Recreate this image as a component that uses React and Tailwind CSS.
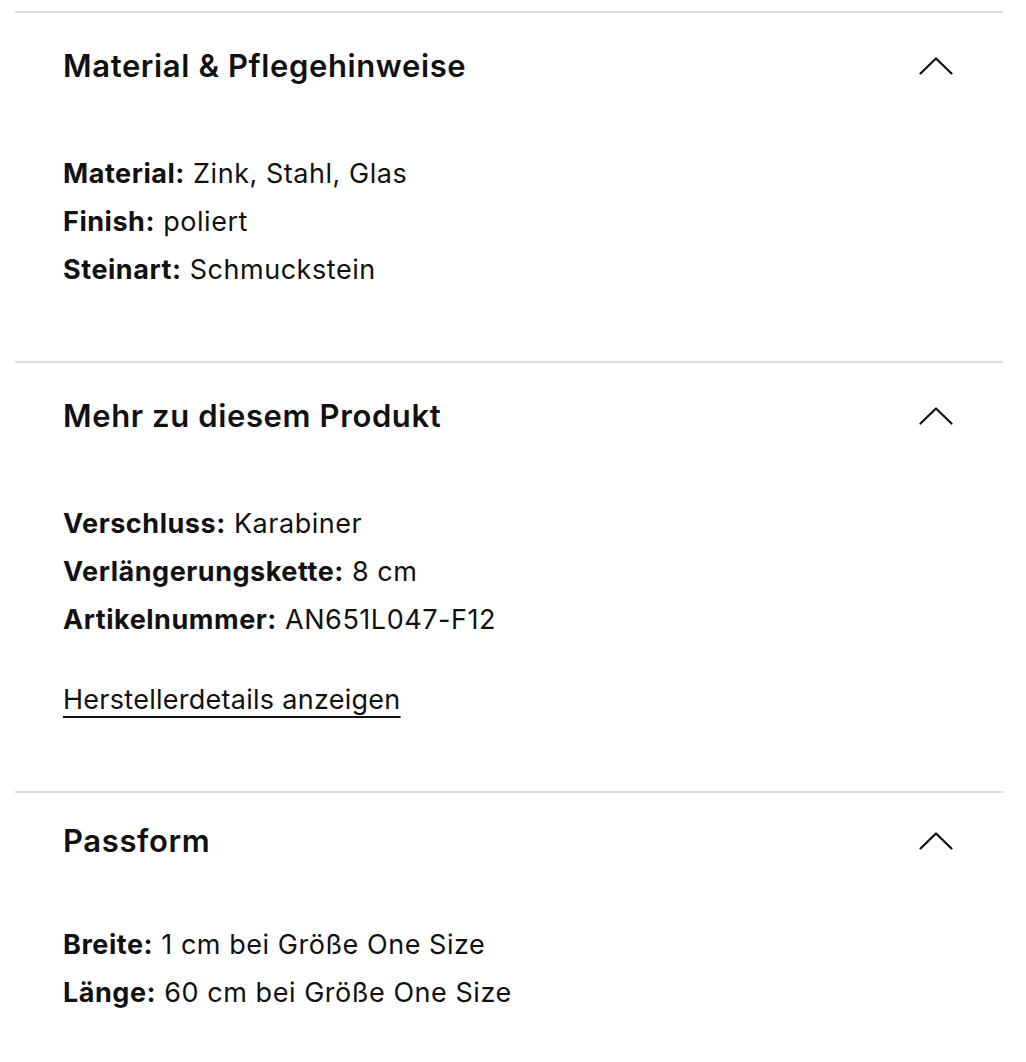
const sections = [
  {
    title: 'Material & Pflegehinweise',
    rows: [
      ['Material:', 'Zink, Stahl, Glas'],
      ['Finish:', 'poliert'],
      ['Steinart:', 'Schmuckstein'],
    ],
  },
  {
    title: 'Mehr zu diesem Produkt',
    rows: [
      ['Verschluss:', 'Karabiner'],
      ['Verlängerungskette:', '8 cm'],
      ['Artikelnummer:', 'AN651L047-F12'],
    ],
    link: 'Herstellerdetails anzeigen',
  },
  {
    title: 'Passform',
    rows: [
      ['Breite:', '1 cm bei Größe One Size'],
      ['Länge:', '60 cm bei Größe One Size'],
    ],
    compact: true,
  },
];

function ChevronUp() {
  return (
    <svg width="34" height="18" viewBox="0 0 34 18" fill="none" className="shrink-0">
      <path d="M1.5 16.5 L17 1.5 L32.5 16.5" stroke="#111" strokeWidth="2.2" strokeLinecap="round" strokeLinejoin="round" />
    </svg>
  );
}

function Section({ title, rows, link, compact }) {
  return (
    <section className={compact ? 'border-t-2 border-[#dcdcdc] pt-[28px] pb-[60px]' : 'border-t-2 border-[#dcdcdc] pt-[33px] pb-[67px]'}>
      <div className="flex items-center justify-between pl-[48px] pr-[50px] h-[40px]">
        <h2 className="text-[31px] font-semibold leading-[40px] tracking-[0.02em] text-[#111]">{title}</h2>
        <ChevronUp />
      </div>
      <div className={compact ? 'mt-[60px] pl-[48px]' : 'mt-[64px] pl-[48px]'}>
        {rows.map(([label, value]) => (
          <p key={label} className="text-[27px] leading-[48px] tracking-[0.02em] text-[#111]">
            <span className="font-bold">{label}</span> {value}
          </p>
        ))}
        {link && (
          <p className="mt-[32px] text-[27px] leading-[48px] tracking-[0.01em]">
            <a href="#" className="text-[#111] underline decoration-2 underline-offset-[7px]">
              {link}
            </a>
          </p>
        )}
      </div>
    </section>
  );
}

export default function App() {
  return (
    <div className="min-h-screen bg-white pt-[11px] font-['Inter','Liberation_Sans',sans-serif]">
      <div className="ml-[15px] w-[988px]">
        {sections.map((s) => (
          <Section key={s.title} {...s} />
        ))}
      </div>
    </div>
  );
}
